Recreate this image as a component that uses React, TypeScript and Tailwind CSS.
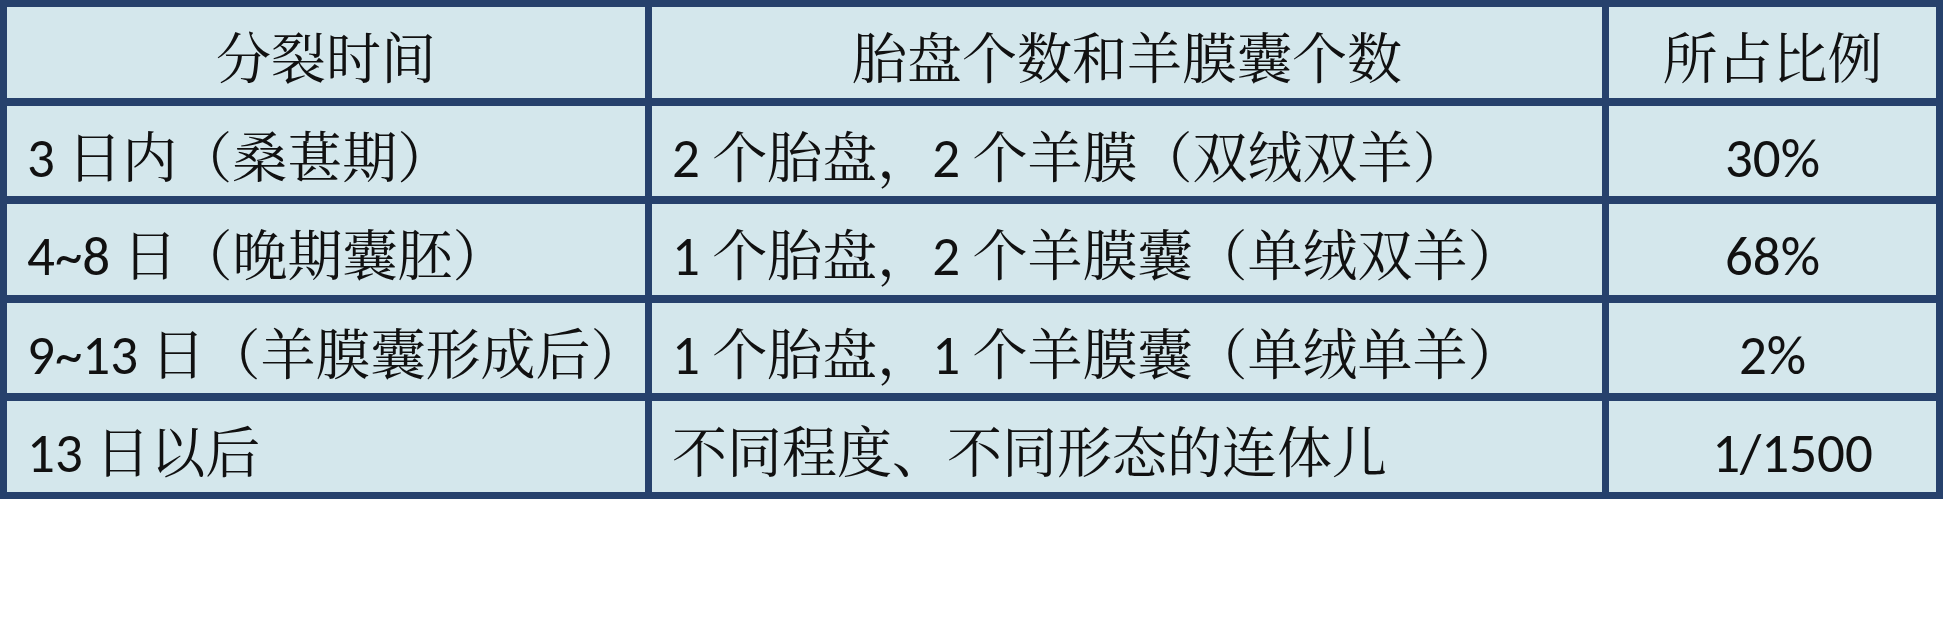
const rows = [
  ["3 日内（桑葚期）", "2 个胎盘，2 个羊膜（双绒双羊）", "30%"],
  ["4~8 日（晚期囊胚）", "1 个胎盘，2 个羊膜囊（单绒双羊）", "68%"],
  ["9~13 日（羊膜囊形成后）", "1 个胎盘，1 个羊膜囊（单绒单羊）", "2%"],
  ["13 日以后", "不同程度、不同形态的连体儿", "1/1500"],
];

const cell =
  "bg-[#d4e7ec] flex items-center pt-[14px] text-[55px] leading-none text-[#111111] whitespace-nowrap overflow-hidden";

export default function App() {
  return (
    <div className="w-[1944px] h-[618px] bg-white font-['Carlito','Lato','Noto_Serif_CJK_SC','Noto_Sans_CJK_SC',serif]">
      <div className="w-[1943px] bg-[#26416c] p-[7px] grid grid-cols-[638px_950px_327px] grid-rows-[91px_90px_91px_90px_91px] gap-x-[7px] gap-y-[8px]">
        <div className={`${cell} justify-center`}>分裂时间</div>
        <div className={`${cell} justify-center`}>胎盘个数和羊膜囊个数</div>
        <div className={`${cell} justify-center`}>所占比例</div>
        {rows.map((r, i) => (
          <div key={i} className="contents">
            <div className={`${cell} pl-[20px]`}>{r[0]}</div>
            <div className={`${cell} pl-[20px]`}>{r[1]}</div>
            <div className={`${cell} justify-center ${i === 3 ? "pl-[40px]" : ""}`}>{r[2]}</div>
          </div>
        ))}
      </div>
    </div>
  );
}
